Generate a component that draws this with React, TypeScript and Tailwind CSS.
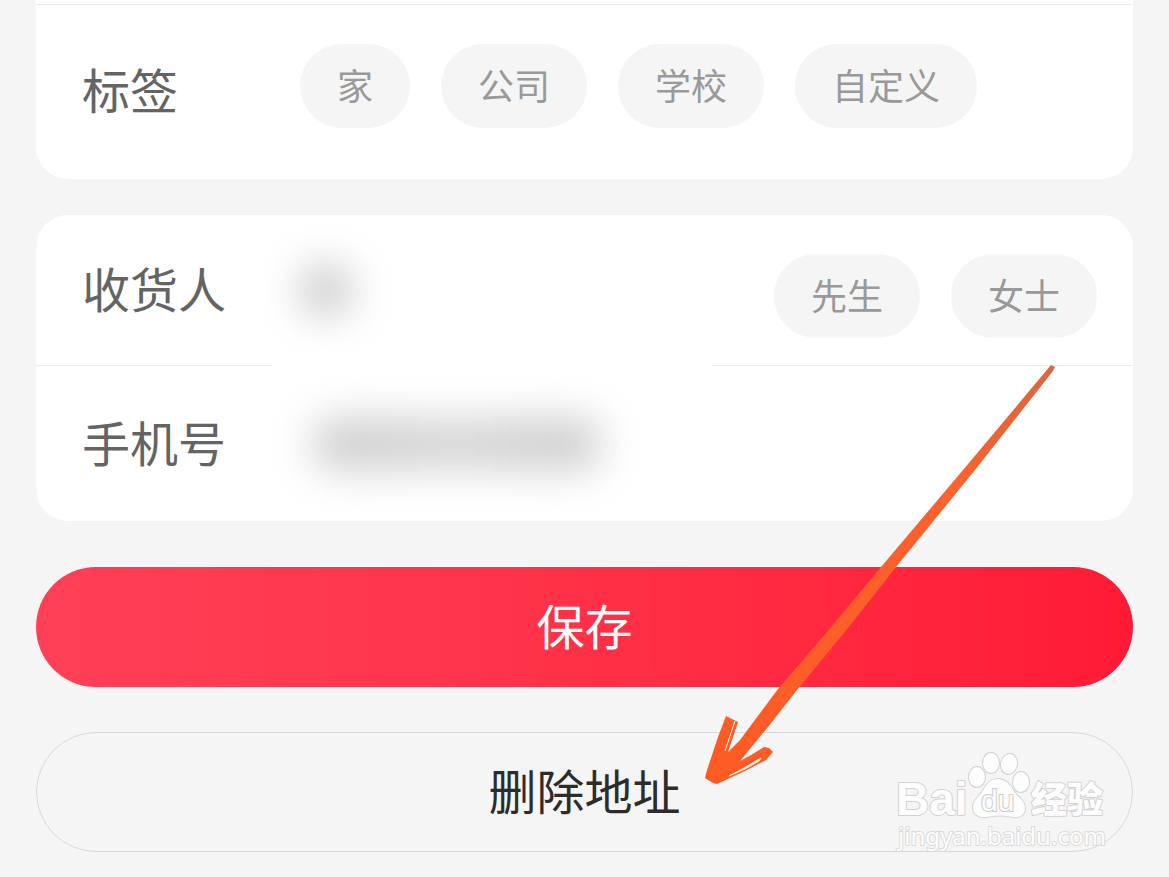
import type { ReactNode } from "react";

const LABEL = "w-[218px] shrink-0 text-5xl leading-[60px] text-[#646464]";

function Chip({ children }: { children: ReactNode }) {
  return (
    <button
      type="button"
      className="h-[84px] rounded-full bg-[#f5f5f5] px-[37px] pb-1 text-4xl leading-[54px] whitespace-nowrap text-[#999999]"
    >
      {children}
    </button>
  );
}

function Arrow() {
  return (
    <svg
      className="pointer-events-none absolute top-[360px] left-[700px]"
      width="360"
      height="430"
      viewBox="700 360 360 430"
      aria-hidden="true"
    >
      <defs>
        <linearGradient id="shaft" x1="0" y1="1" x2="1" y2="0">
          <stop offset="0" stopColor="#ff5a24" />
          <stop offset="0.7" stopColor="#fb622e" />
          <stop offset="1" stopColor="#d9673f" />
        </linearGradient>
      </defs>
      <path
        d="M1051 365 L1055 367 L1053 371 L975 470 L896 567 L848 628 L797 690 L768 727 L740 761 L751 755 L764 747 L769 748 L773 752 L766 760 L745 771 L717 784 L713 783 L705 778 L707 770 L718 737 L726 716 L732 719 L738 722 L728 752 L740 740 L778 689 L827 632 L881 567 L963 470 Z"
        fill="url(#shaft)"
      />
      <path d="M735 721 L725 751" stroke="#fff3ea" strokeWidth="1" fill="none" />
      <path d="M729 776 L744 768 L761 758 L759 761 L745 769 Z" fill="#fff3ea" stroke="#fff3ea" strokeWidth="1" />
    </svg>
  );
}

function Watermark() {
  return (
    <svg
      className="pointer-events-none absolute right-[55px] bottom-[22px]"
      width="220"
      height="110"
      viewBox="894 745 220 110"
      role="img"
      aria-label="Bai du 经验 jingyan.baidu.com"
    >
      <g fill="#fdfdfd" stroke="#d2d2d2" strokeWidth="2" paintOrder="stroke" strokeLinejoin="round">
        <text x="896" y="815" fontSize="46" fontWeight="700" fontFamily="Liberation Sans, Arial, sans-serif">
          Bai
        </text>
        <ellipse cx="977" cy="777" rx="8" ry="10" />
        <ellipse cx="991" cy="763" rx="8" ry="10" />
        <ellipse cx="1009" cy="764" rx="8" ry="10" transform="rotate(12 1009 764)" />
        <ellipse cx="1021" cy="782" rx="8" ry="10" />
        <path d="M998 779 C1005 779 1010 784 1013 790 C1017 797 1025 800 1025 808 C1025 815 1020 818 1013 817 C1004 815 995 815 986 817 C978 818 973 814 973 807 C973 800 980 796 984 789 C987 783 991 779 998 779 Z" />
        <text x="1031" y="813" fontSize="36" fontWeight="900" fontFamily="Noto Sans CJK SC, sans-serif">
          经验
        </text>
      </g>
      <text
        x="981"
        y="811"
        fontSize="30"
        fontFamily="Liberation Sans, Arial, sans-serif"
        fill="#fdfdfd"
        stroke="#cacaca"
        strokeWidth="2"
        paintOrder="stroke"
      >
        du
      </text>
      <text
        x="898"
        y="845"
        fontSize="24"
        fontFamily="Noto Sans, sans-serif"
        fill="#fdfdfd"
        stroke="#dadada"
        strokeWidth="2"
        paintOrder="stroke"
      >
        jingyan.baidu.com
      </text>
    </svg>
  );
}

export default function App() {
  return (
    <main className="relative min-h-screen bg-[#f5f5f5] px-9 pb-6 font-['Noto_Sans_CJK_SC',sans-serif]">
      <section className="rounded-b-[32px] bg-white pt-1">
        <div className="flex items-start border-t border-[#ececec] pt-[39px] pr-9 pb-[51px] pl-[46px]">
          <h2 className={`${LABEL} pt-[14px]`}>标签</h2>
          <div className="flex gap-[31px]">
            <Chip>家</Chip>
            <Chip>公司</Chip>
            <Chip>学校</Chip>
            <Chip>自定义</Chip>
          </div>
        </div>
      </section>

      <form className="mt-9">
        <section className="rounded-[32px] bg-white">
          <div className="flex h-[150px] items-center pr-9 pl-[46px]">
            <label htmlFor="recipient" className={`${LABEL} pb-[6px]`}>
              收货人
            </label>
            <input id="recipient" type="text" readOnly className="h-[52px] w-[52px] rounded-full bg-[#c8c8c8] blur-[20px] outline-none" />
            <div className="ml-auto flex gap-[31px] pt-3">
              <Chip>先生</Chip>
              <Chip>女士</Chip>
            </div>
          </div>
          <div className="flex h-px gap-[440px]">
            <div className="w-[236px] bg-[#ececec]" />
            <div className="flex-1 bg-[#ececec]" />
          </div>
          <div className="flex h-[155px] items-center pl-[46px]">
            <label htmlFor="phone" className={`${LABEL} pb-[6px]`}>
              手机号
            </label>
            <input id="phone" type="tel" readOnly className="ml-3 h-[52px] w-[290px] rounded-full bg-linear-to-r from-[#cccccc] via-[#d6d6d6] to-[#cccccc] blur-[20px] outline-none" />
          </div>
        </section>

        <button
          type="submit"
          className="mt-[46px] block h-[120px] w-full rounded-full bg-linear-to-r from-[#ff4057] to-[#ff1a35] pb-[6px] text-5xl leading-[72px] text-white"
        >
          保存
        </button>
        <button
          type="button"
          className="mt-[45px] block h-[120px] w-full rounded-full border border-[#d8d8d8] pb-[6px] text-5xl leading-[72px] text-[#2c2c2c]"
        >
          删除地址
        </button>
      </form>

      <Watermark />
      <Arrow />
    </main>
  );
}
